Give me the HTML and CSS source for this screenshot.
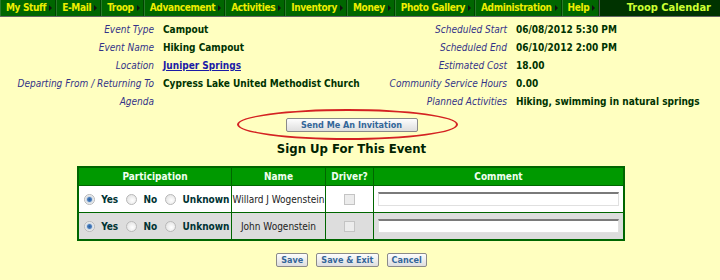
FILE: index.html
```html
<!DOCTYPE html>
<html lang="en">
<head>
  <meta charset="UTF-8">
  <title>Troop Calendar</title>
  <link rel="stylesheet" href="styles.css">
</head>
<body>
  <div class="topbar">
    <ul class="menu">
      <li>My Stuff</li>
      <li>E-Mail</li>
      <li>Troop</li>
      <li>Advancement</li>
      <li>Activities</li>
      <li>Inventory</li>
      <li>Money</li>
      <li>Photo Gallery</li>
      <li>Administration</li>
      <li>Help</li>
    </ul>
    <div class="page-title">Troop Calendar</div>
  </div>

  <div class="content">
    <!-- Event details -->
    <div class="details">
      <span class="lbl">Event Type</span><span class="val">Campout</span>
      <span class="lbl">Scheduled Start</span><span class="val">06/08/2012 5:30 PM</span>
      <span class="lbl">Event Name</span><span class="val">Hiking Campout</span>
      <span class="lbl">Scheduled End</span><span class="val">06/10/2012 2:00 PM</span>
      <span class="lbl">Location</span><span class="val"><a href="#">Juniper Springs</a></span>
      <span class="lbl">Estimated Cost</span><span class="val">18.00</span>
      <span class="lbl">Departing From / Returning To</span><span class="val">Cypress Lake United Methodist Church</span>
      <span class="lbl">Community Service Hours</span><span class="val">0.00</span>
      <span class="lbl">Agenda</span><span class="val"></span>
      <span class="lbl">Planned Activities</span><span class="val">Hiking, swimming in natural springs</span>
    </div>

    <div class="invite-row">
      <span class="invite">
        <button class="btn">Send Me An Invitation</button>
        <span class="circle"></span>
      </span>
    </div>

    <h2>Sign Up For This Event</h2>

    <table class="signup">
      <thead>
        <tr>
          <th class="c-part">Participation</th>
          <th class="c-name">Name</th>
          <th class="c-drv">Driver?</th>
          <th>Comment</th>
        </tr>
      </thead>
      <tbody>
        <tr>
          <td class="part">
            <label><input type="radio" name="p1" checked> Yes</label>
            <label><input type="radio" name="p1"> No</label>
            <label><input type="radio" name="p1"> Unknown</label>
          </td>
          <td class="name">Willard J Wogenstein</td>
          <td class="drv"><input type="checkbox" disabled></td>
          <td><input type="text" class="comment"></td>
        </tr>
        <tr class="alt">
          <td class="part">
            <label><input type="radio" name="p2" checked> Yes</label>
            <label><input type="radio" name="p2"> No</label>
            <label><input type="radio" name="p2"> Unknown</label>
          </td>
          <td class="name">John Wogenstein</td>
          <td class="drv"><input type="checkbox" disabled></td>
          <td><input type="text" class="comment"></td>
        </tr>
      </tbody>
    </table>

    <div class="actions">
      <button class="btn">Save</button>
      <button class="btn">Save &amp; Exit</button>
      <button class="btn">Cancel</button>
    </div>
  </div>
</body>
</html>
```

FILE: styles.css
```css
body {
  margin: 0;
  background-color: #ffffc0;
  font-family: "DejaVu Sans Condensed", "DejaVu Sans", sans-serif;
  font-size: 10px;
  color: #003300;
  height: 280px;
  overflow: hidden;
}
.topbar {
  display: flex;
  height: 16px;
  background-color: #003300;
  border-bottom: 1px solid #666;
  white-space: nowrap;
}
.menu {
  display: flex;
  margin: 0;
  padding: 0;
  list-style: none;
  background-color: #006600;
  border-right: 1px solid #555;
}
.menu li {
  position: relative;
  padding: 0 9px 0 5px;
  line-height: 16px;
  font-weight: bold;
  letter-spacing: -0.35px;
  color: #eeee00;
  border-right: 1px solid #004400;
  border-left: 1px solid #2a7a2a;
}
.menu li::after {
  content: "";
  position: absolute;
  right: 3px;
  top: 5px;
  border-left: 3px solid #111;
  border-top: 3px solid transparent;
  border-bottom: 3px solid transparent;
}
.page-title {
  flex: 1;
  text-align: right;
  padding-right: 9px;
  line-height: 16px;
  font-weight: bold;
  font-size: 11px;
  color: #ccff33;
}
.content {
  width: 703px;
}
.details {
  display: grid;
  grid-template-columns: 146px 197px 138px auto;
  column-gap: 9px;
  margin: 4px 0 0 8px;
}
.details span {
  line-height: 18px;
  white-space: nowrap;
}
.lbl {
  text-align: right;
  font-style: italic;
  color: #333388;
}
.val {
  font-weight: bold;
}
.val a {
  color: #1a1aa6;
}
.invite-row {
  text-align: center;
  margin-top: 7px;
}
.invite {
  position: relative;
  display: inline-block;
}
.btn {
  font-family: inherit;
  font-size: 9px;
  font-weight: bold;
  color: #336699;
  height: 14px;
  padding: 0 4px;
  line-height: 12px;
  border: 1px solid #8a8a8a;
  border-radius: 2px;
  background: linear-gradient(#fdfdfd, #dedede);
}
.invite .btn {
  width: 132px;
  display: block;
}
.circle {
  position: absolute;
  left: -49px;
  right: -40px;
  top: -9px;
  bottom: -8px;
  border: 2px solid #d42222;
  border-radius: 50%;
}
h2 {
  margin: 8px 0 0;
  text-align: center;
  font-size: 13px;
  line-height: 18px;
  color: #002200;
}
.signup {
  margin: 8px 0 0 77px;
  width: 548px;
  table-layout: fixed;
  border-collapse: collapse;
  border: 2px solid #006600;
}
.signup th {
  background-color: #009900;
  color: #f0fff0;
  height: 17px;
  padding: 0;
  border: 1px solid #006600;
}
.signup td {
  height: 26px;
  padding: 0;
  border: 1px solid #006600;
  background-color: #fff;
}
.signup .alt td {
  background-color: #dddddd;
}
.c-part { width: 152px; }
.c-name { width: 93px; }
.c-drv { width: 47px; }
.part {
  font-weight: bold;
  font-size: 10px;
  color: #003333;
  white-space: nowrap;
}
.part label {
  margin-left: 5px;
}
.part label + label {
  margin-left: 5px;
}
.part input {
  appearance: none;
  margin: 0 3px 0 0;
  width: 11px;
  height: 11px;
  vertical-align: -2px;
  border: 1px solid #b8b8b8;
  border-radius: 50%;
  background: radial-gradient(circle at 60% 60%, #ffffff, #dcdcdc);
}
.part input:checked {
  background: radial-gradient(circle, #2b5d9a 0, #4a7fc0 2px, #cfd8e0 3px, #ffffff 5px);
}
.name {
  text-align: center;
  font-size: 10px;
  color: #222;
}
.drv {
  text-align: center;
}
.drv input {
  appearance: none;
  margin: 0;
  width: 11px;
  height: 11px;
  vertical-align: middle;
  border: 1px solid #c4c4c4;
  background: #ececec;
}
.comment {
  display: block;
  margin: 0 auto 0 4px;
  width: 241px;
  height: 14px;
  padding: 0;
  box-sizing: border-box;
  border: 1px solid #e0e0e0;
  border-top: 2px solid #7a7a7a;
  background: #fff;
}
.actions {
  margin-top: 12px;
  display: flex;
  justify-content: center;
  gap: 8px;
}
```
